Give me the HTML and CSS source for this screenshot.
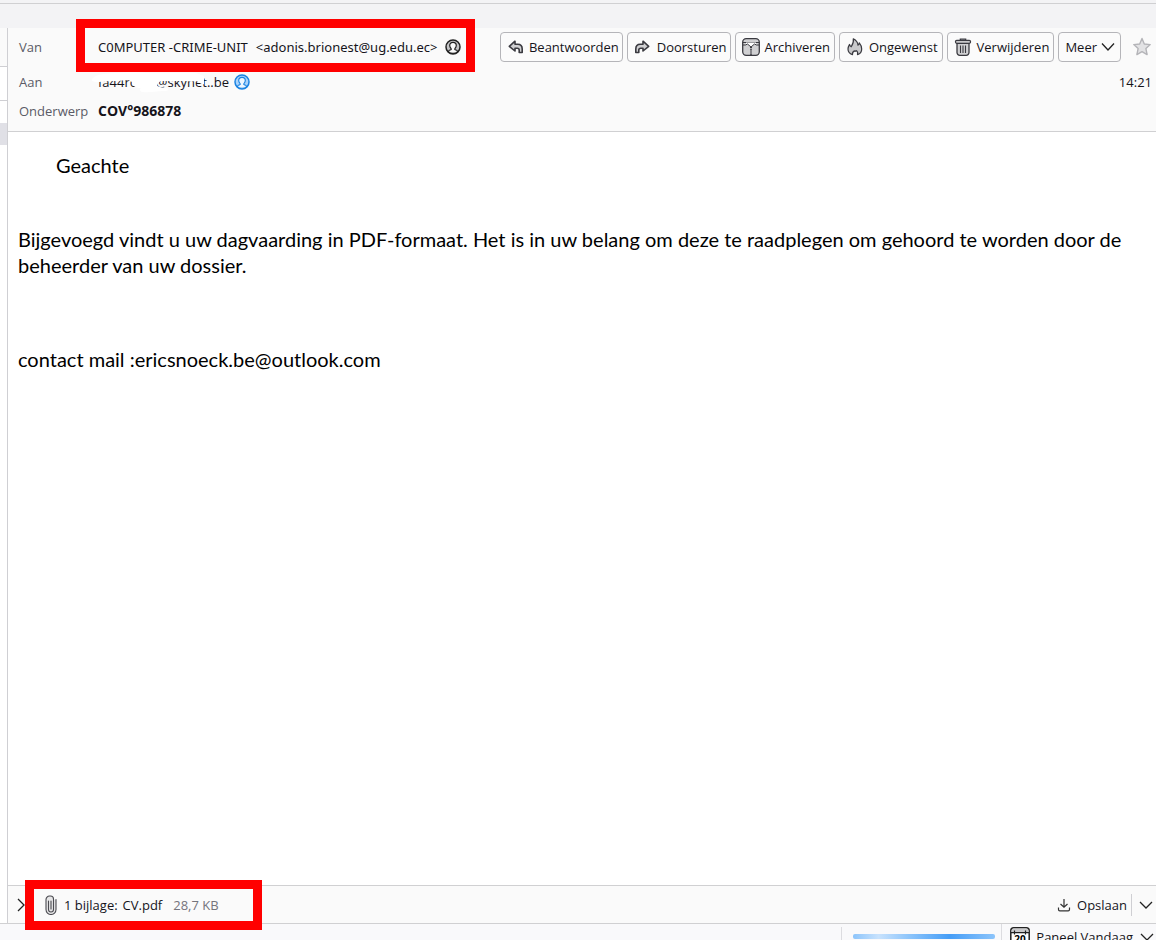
FILE: index.html
```html
<!DOCTYPE html>
<html lang="nl">
<head>
<meta charset="utf-8">
<title>COV°986878</title>
<link rel="stylesheet" href="styles.css">
</head>
<body>
<div class="app">
  <div class="topbar"></div>
  <div class="workspace">
    <div class="thread-strip">
      <div class="strip-head"></div>
      <div class="strip-row"></div>
      <div class="strip-gap"></div>
      <div class="strip-selected"></div>
    </div>
    <main class="message">
      <header class="headers">
        <div class="row row-from">
          <span class="label">Van</span>
          <span class="value sender"><span>C0MPUTER -CRIME-UNIT</span> <span>&lt;adonis.brionest@ug.edu.ec&gt;</span></span>
          <svg class="contact" viewBox="0 0 16 16"><circle cx="8" cy="8" r="7" fill="#c4c4c6" stroke="#222" stroke-width="1.5"/><path d="M3.300 12.600c.3-1.400 1.200-1.700 2.600-2 .5-.2.5-.6.1-1.100C5 8.400 4.700 7.500 4.700 6.500 4.700 4.500 6 3.400 8 3.400s3.300 1.100 3.300 3.100c0 1-.3 1.900-1.300 3-.4.5-.4.900.1 1.100 1.400.3 2.300.6 2.600 2C11.500 13.800 9.900 14.300 8 14.300s-3.500-.5-4.700-1.700z" fill="#fafafa" stroke="#222" stroke-width="1.200"/></svg>
          <div class="actions">
            <button type="button" class="btn btn-reply"><svg class="ic" viewBox="0 0 16 16"><path d="M7 2.200 1.300 7.300 7 12V9.300h2.300c1.300 0 1.900.6 1.900 1.700v2.500h3V10c0-3-1.500-4.700-4.500-4.700H7z" fill="#d0d0d2" stroke="#3a3a40" stroke-width="1.600" stroke-linejoin="round"/></svg>Beantwoorden</button>
            <button type="button" class="btn btn-forward"><svg class="ic" viewBox="0 0 16 16"><path d="M9 2.200 14.700 7.300 9 12V9.300H6.700c-1.300 0-1.900.6-1.900 1.700v2.500h-3V10c0-3 1.500-4.700 4.500-4.700H9z" fill="#d0d0d2" stroke="#3a3a40" stroke-width="1.600" stroke-linejoin="round"/></svg>Doorsturen</button>
            <button type="button" class="btn btn-wide"><svg class="ic ic-lg" viewBox="0 0 18 18"><rect x=".7" y=".7" width="16.600" height="16.600" rx="3.500" fill="#d0d0d2" stroke="#3a3a40" stroke-width="1.300"/><path d="M1 4.500h16" stroke="#3a3a40"/><path d="M4 4.500h10v2.200L12.500 6 9 9 5.500 6 4 6.700z" fill="#fff"/><path d="M1 7h2.500l2-1L9 9l3.500-3 2 1H17" fill="none" stroke="#3a3a40"/><path d="M9 9v8" stroke="#3a3a40" stroke-width="2" stroke-dasharray="1.200 1"/></svg>Archiveren</button>
            <button type="button" class="btn btn-junk"><svg class="ic ic-lg" viewBox="0 0 18 18"><path d="M6.500 16.700C3.600 15.700 2 13.700 2 11c0-2 .8-3.300 1.500-4.500.4 1.200.8 1.800 1.700 2.300C6.600 6.500 8 4.400 7.300.8c2.700 1.400 4.500 3.800 4.700 6.400.9-.4 1.300-1.300 1.300-2.400 1.600 1.900 2.400 3.900 2.400 6.200 0 2.800-1.500 4.900-4.200 5.700.5-1.800 0-3.500-1.500-4.200-.3.900-.9 1-1.500.4C6.800 13.800 6.200 15 6.500 16.700z" fill="#c9c9cb" stroke="#3a3a40" stroke-width="1.200" stroke-linejoin="round"/></svg>Ongewenst</button>
            <button type="button" class="btn btn-wide"><svg class="ic ic-lg" viewBox="0 0 18 18"><path d="M3 5h12v9.500a2.800 2.800 0 0 1-2.800 2.800H5.800A2.800 2.800 0 0 1 3 14.500z" fill="#d0d0d2" stroke="#3a3a40" stroke-width="1.300"/><path d="M6.500 7.500V15M9 7.500V15M11.500 7.500V15" stroke="#3a3a40" stroke-width="1.100"/><path d="M6.300 2.500V1.200h5.400v1.300" fill="none" stroke="#3a3a40" stroke-width="1.200"/><rect x="1.500" y="2.300" width="15" height="3" rx="1.200" fill="#c9c9cb" stroke="#3a3a40" stroke-width="1.200"/></svg>Verwijderen</button>
            <button type="button" class="btn btn-more">Meer<svg class="chev" viewBox="0 0 14 14"><path d="m1 3.500 6 6.500 6-6.500" fill="none" stroke="#222" stroke-width="1.300"/></svg></button>
            <button type="button" class="star" aria-label="Ster"><svg viewBox="0 0 20 20"><path d="M10 1.500 12.300 7l5.900.6-4.300 4 1.200 6-5.100-3-5.100 3 1.200-6-4.300-4L7.700 7z" fill="#e2e2e4" stroke="#b4b4b8" stroke-width="1.400" stroke-linejoin="round"/></svg></button>
          </div>
          <div class="mark mark-from"></div>
        </div>
        <div class="row row-to">
          <span class="label">Aan</span>
          <span class="value redacted">fa44ro...n@skynet..be<svg class="scribble" viewBox="0 0 136 24"><path d="M0 9C5 3 15 4 24 3S46 2 56 3s40-1 48 0l8 3v8c-3 1-4-2-8-3-8 1-9 0-15 0s-12 0-18 0c-3 0-5 1-6 5 4 2 8 1 10 2s2 3-3 3c-9 0-14 2-22 1-2-1-3-3-1-4-4 0-9-2-9-5 0-2-3-3-6-3-6 1-9 1-13 1s-12 1-15 1S-2 11 0 9z" fill="#fff"/></svg></span>
          <svg class="contact" viewBox="0 0 16 16"><circle cx="8" cy="8" r="7" fill="#a9d3fb" stroke="#1a83e2" stroke-width="1.500"/><path d="M3.300 12.600c.3-1.400 1.200-1.700 2.600-2 .5-.2.5-.6.1-1.100C5 8.400 4.700 7.500 4.700 6.500 4.700 4.500 6 3.400 8 3.400s3.300 1.100 3.300 3.100c0 1-.3 1.900-1.300 3-.4.5-.4.900.1 1.100 1.400.3 2.300.6 2.600 2C11.500 13.800 9.900 14.300 8 14.300s-3.500-.5-4.700-1.700z" fill="#eef7ff" stroke="#1a83e2" stroke-width="1.100"/></svg>
          <time class="time">14:21</time>
        </div>
        <div class="row row-subject">
          <span class="label">Onderwerp</span>
          <strong class="value subject">COV°986878</strong>
        </div>
      </header>
      <article class="body">
        <p class="greeting">Geachte</p>
        <p class="para">Bijgevoegd vindt u uw dagvaarding in PDF-formaat. Het is in uw belang om deze te raadplegen om gehoord te worden door de beheerder van uw dossier.</p>
        <p class="contact-line">contact mail :ericsnoeck.be@outlook.com</p>
      </article>
      <footer class="attachments">
        <button type="button" class="plain" aria-label="Uitklappen"><svg class="chev" viewBox="0 0 14 14"><path d="m4 1 6 6-6 6" fill="none" stroke="#222" stroke-width="1.300"/></svg></button>
        <svg class="clip" viewBox="0 0 12 20"><path d="M3.500 6v8.500a2.500 2.500 0 0 0 5 0V4A3 3 0 0 0 5.500 1h-1A3.500 3.500 0 0 0 1 4.500v10a5 5 0 0 0 10 0V4.500M6 6v8" fill="#e6e6e7" stroke="#4a4a50" stroke-width="1.100" stroke-linecap="round"/></svg>
        <span class="count">1 bijlage:</span>
        <span class="file">CV.pdf</span>
        <span class="size">28,7 KB</span>
        <button type="button" class="plain save"><svg class="down" viewBox="0 0 14 14"><path d="M7 1v8M3.500 6 7 9.300 10.500 6M1.500 9.500v2a1.300 1.300 0 0 0 1.300 1.300h8.400a1.300 1.300 0 0 0 1.300-1.300v-2" fill="none" stroke="#333" stroke-width="1.200"/></svg>Opslaan</button>
        <button type="button" class="plain save-menu" aria-label="Meer opties"><svg class="chev" viewBox="0 0 14 14"><path d="m1 4 6 6 6-6" fill="none" stroke="#222" stroke-width="1.300"/></svg></button>
        <div class="mark mark-file"></div>
      </footer>
    </main>
  </div>
  <div class="status">
    <div class="progress"><div class="progress-fill"></div></div>
    <button type="button" class="plain today"><svg class="cal" viewBox="0 0 20 20"><rect x=".8" y=".8" width="18.400" height="18.400" rx="3" fill="#fff" stroke="#222" stroke-width="1.500"/><path d="M1.500 5.500V3.500a2 2 0 0 1 2-2h13a2 2 0 0 1 2 2v2z" fill="#c9c9cb"/><path d="M1 5.700h18M4.500 3.500v4M15.500 3.500v4" stroke="#222" stroke-width="1.200"/><text x="10" y="16" text-anchor="middle" class="cal-day">20</text></svg>Paneel Vandaag<svg class="chev" viewBox="0 0 14 14"><path d="m1 4 6 6 6-6" fill="none" stroke="#222" stroke-width="1.300"/></svg></button>
  </div>
</div>
</body>
</html>
```

FILE: styles.css
```css
* { box-sizing: border-box; }

body {
  margin: 0;
  font: 13px/20px "Open Sans", "Noto Sans", sans-serif;
  color: #15141a;
  background: #fff;
}

.app {
  display: flex;
  flex-direction: column;
  height: 100vh;
  overflow: hidden;
}

.topbar {
  flex: none;
  height: 28px;
  background: linear-gradient(#d0d0d2, #d0d0d2) 0 3px / 100% 1px no-repeat #f3f3f5;
}

.workspace { display: flex; flex: 1; min-height: 0; }

.thread-strip { flex: none; width: 8px; border-right: 1px solid #cfcfd3; }
.strip-head { height: 39px; background: #fafafa; border-bottom: 1px solid #cfcfd3; }
.strip-row { height: 34px; border-bottom: 1px solid #cfcfd3; }
.strip-gap { height: 22px; }
.strip-selected { height: 22px; background: #e0e0e6; }

.message { display: flex; flex: 1; flex-direction: column; min-width: 0; }

.headers {
  padding: 0 4px 7px 11px;
  background: #fafafa;
  border-bottom: 1px solid #d0d0d2;
}

.row { position: relative; display: flex; align-items: center; white-space: nowrap; }
.row-from { height: 38px; }
.row-to { height: 32px; }
.row-subject { height: 26px; }

.label { flex: none; width: 79px; color: #5b5b66; }
.sender { display: flex; gap: 8px; margin-right: 3px; font-family: "Noto Sans", "Open Sans", sans-serif; }
.subject { font-size: 14px; }
.contact { flex: none; width: 16px; height: 16px; margin-left: 5px; }

.actions { display: flex; align-items: center; gap: 4px; margin-left: auto; }

.btn {
  display: flex;
  align-items: center;
  gap: 5px;
  height: 30px;
  padding: 0 4px 0 8px;
  font: inherit;
  color: inherit;
  background: #fbfbfb;
  border: 1px solid #b5b5b9;
  border-radius: 4px;
}
.btn-reply { padding: 0 3px 0 7px; }
.btn-forward { padding: 0 3px 0 6px; gap: 7px; }
.btn-wide { padding: 0 4px 0 6px; }
.btn-junk { padding-left: 6px; }
.btn-more { padding: 0 5px 0 6px; gap: 4px; }
.ic { width: 16px; height: 16px; }
.ic-lg { width: 18px; height: 18px; }
.chev { width: 14px; height: 14px; }

.star { display: flex; margin-left: 7px; padding: 0; background: none; border: 0; }
.star svg { width: 20px; height: 20px; }

.mark { position: absolute; border: 9px solid #f00; pointer-events: none; }
.mark-from { left: 57px; top: -9px; width: 399px; height: 53px; }
.mark-file { left: 17px; top: -6px; width: 237px; height: 50px; }

.redacted { position: relative; }
.scribble { position: absolute; left: -6px; top: -2px; width: 136px; height: 24px; }
.time { margin-left: auto; }

.body {
  flex: 1;
  min-height: 0;
  padding: 20px 10px;
  font: 20px/26px Lato, "Open Sans", sans-serif;
  color: #000;
}
.body p { margin: 0; }
.body .greeting { margin-left: 38px; }
.body .para { margin-top: 48px; }
.body .contact-line { margin-top: 68px; }

.attachments {
  position: relative;
  display: flex;
  flex: none;
  align-items: center;
  height: 38px;
  padding: 0 3px 0 6px;
  background: #fafafa;
  border-top: 1px solid #d0d0d2;
  white-space: nowrap;
}
.plain {
  display: flex;
  align-items: center;
  padding: 0;
  font: inherit;
  color: inherit;
  background: none;
  border: 0;
}
.clip { width: 12px; height: 20px; margin: 0 7px 0 17px; }
.file { margin-left: 5px; }
.size { margin-left: 11px; color: #74747c; }
.save { gap: 6px; margin-left: auto; }
.down { width: 14px; height: 14px; }
.save-menu { height: 22px; margin-left: 4px; padding-left: 7px; border-left: 1px solid #cfcfd3; }

.status {
  display: flex;
  flex: none;
  justify-content: flex-end;
  height: 17px;
  overflow: hidden;
  background: #f9f9fb;
  border-top: 1px solid #d0d0d2;
}
.progress { width: 160px; height: 26px; margin-top: 3px; padding: 7px 6px 0 11px; border-left: 1px solid #dcdce0; }
.progress-fill { height: 5px; border-radius: 2px; background: linear-gradient(90deg, #8cc4fb, #c8e2fd 18%, #8cc4fb 40%, #459df7 68%, #8cc4fb); }
.today { height: 26px; padding: 0 2px 0 8px; border-left: 1px solid #dcdce0; }
.cal { width: 20px; height: 20px; margin-right: 6px; }
.cal-day { font: bold 10px "Open Sans", sans-serif; }
.today .chev { margin-left: 7px; }
```
